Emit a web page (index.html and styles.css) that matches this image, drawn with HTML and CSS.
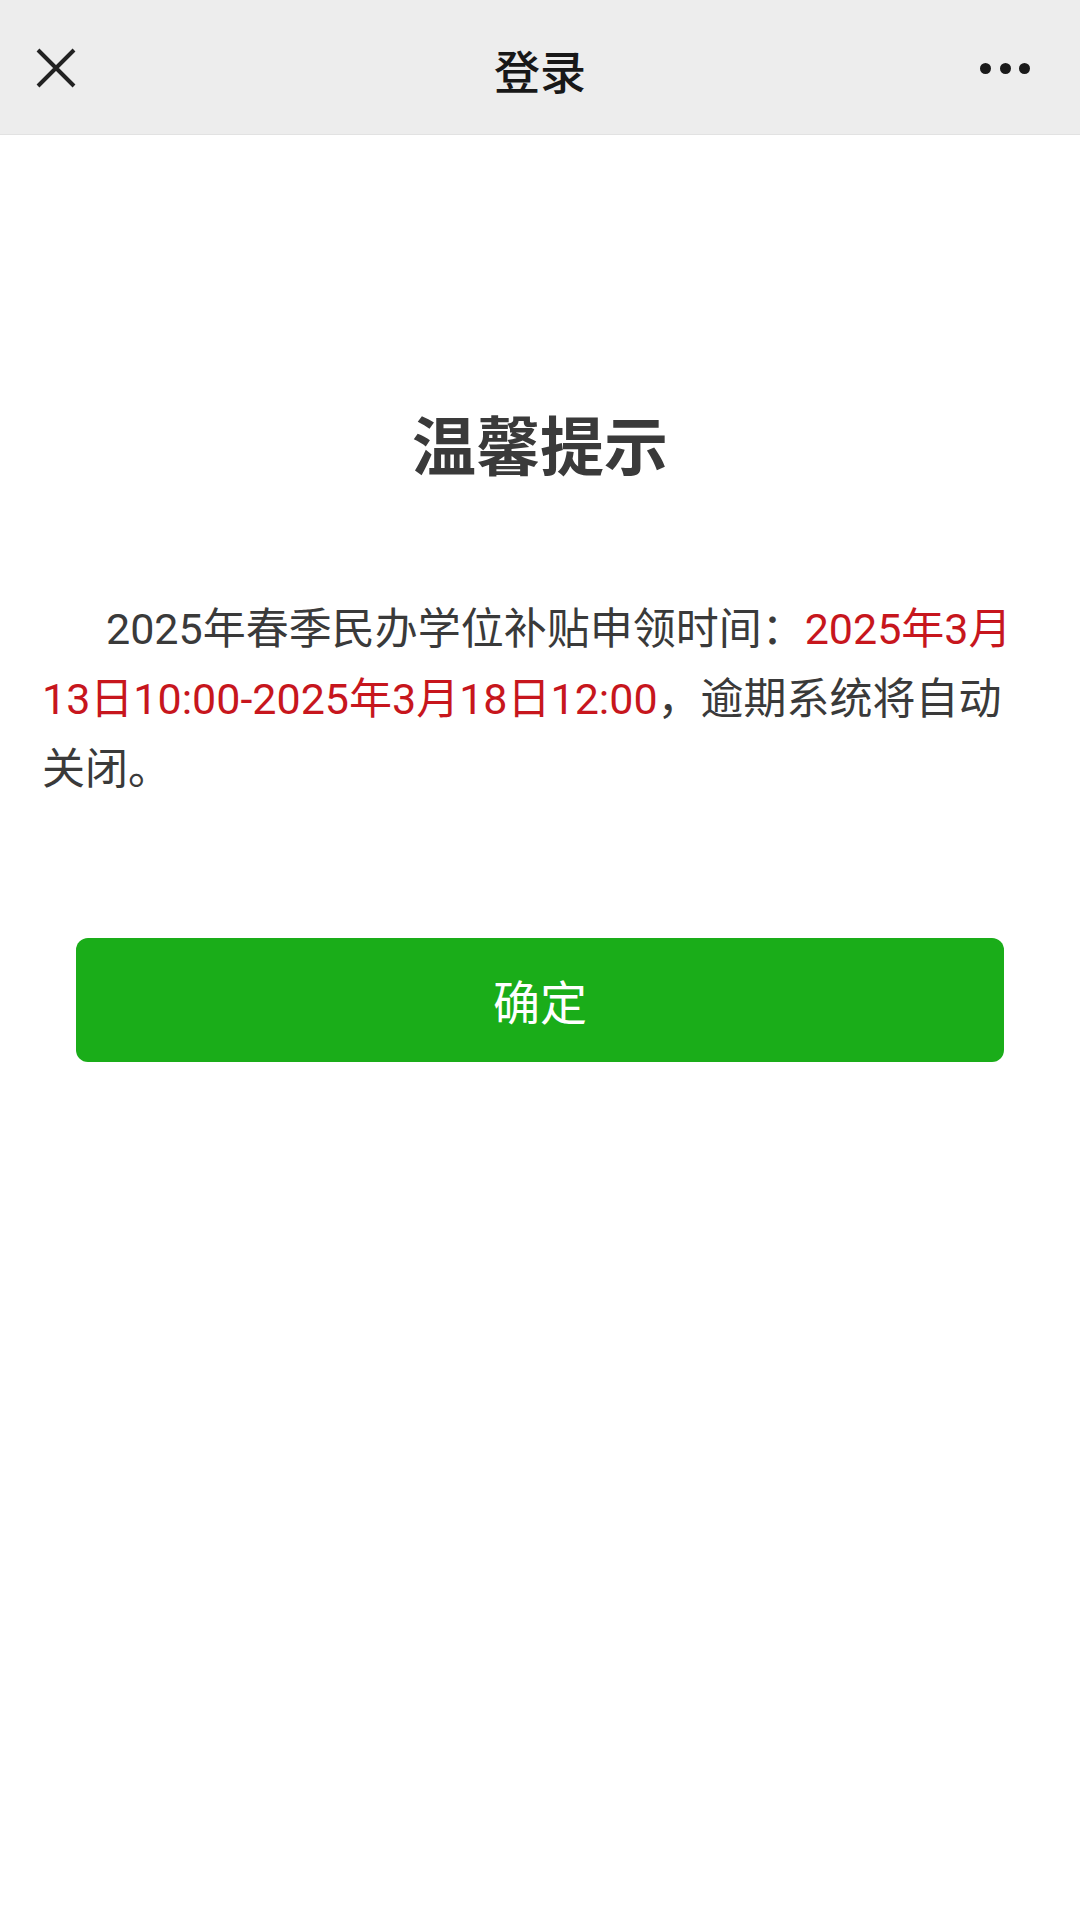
FILE: index.html
```html
<!DOCTYPE HTML>
<html lang="zh-CN">
<head>
	<meta charset="utf-8">
	<title>登录</title>
	<link rel="stylesheet" href="styles.css">
</head>
<body>
	<div class="topbar">
		<span class="topbar-close">
			<svg width="40" height="40" viewBox="0 0 40 40">
				<path d="M2 2 L38 38 M38 2 L2 38" stroke="#222" stroke-width="4" fill="none"/>
			</svg>
		</span>
		<div class="topbar-title">登录</div>
		<span class="topbar-more">
			<i></i><i></i><i></i>
		</span>
	</div>

	<div class="notice">
		<h1 class="notice-title">温馨提示</h1>
		<p class="notice-text">2025年春季民办学位补贴申领时间：<span class="hl">2025年3月13日10:00-2025年3月18日12:00</span>，逾期系统将自动关闭。</p>
		<a class="btn-ok" href="#">确定</a>
	</div>
</body>
</html>
```

FILE: styles.css
```css
html {
	height: 100%;
}

body {
	margin: 0;
	padding: 0;
	background: #ffffff;
	color: #333333;
	font-family: Roboto, "Noto Sans CJK SC", sans-serif;
	min-height: 100%;
}

.topbar {
	height: 134px;
	background-color: #ededed;
	border-bottom: 1px solid #e2e2e2;
	display: grid;
	grid-template-columns: 1fr auto 1fr;
	align-items: center;
	padding: 0 36px 0 36px;
}

.topbar-close {
	width: 40px;
	height: 40px;
	display: block;
	margin-top: 2px;
	justify-self: start;
}

.topbar-close svg {
	display: block;
}

.topbar-title {
	font-family: "Noto Sans CJK SC", sans-serif;
	font-size: 46px;
	font-weight: 500;
	color: #181818;
	margin-top: 4px;
}

.topbar-more {
	width: 50px;
	display: flex;
	justify-content: space-between;
	align-items: center;
	margin-top: 2px;
	margin-right: 14px;
	justify-self: end;
}

.topbar-more i {
	width: 11px;
	height: 11px;
	border-radius: 50%;
	background: #1a1a1a;
	display: block;
}

.notice {
	padding: 0 42px;
}

.notice-title {
	margin: 262px 0 0 0;
	text-align: center;
	font-family: "Noto Sans CJK SC", sans-serif;
	font-size: 64px;
	font-weight: bold;
	line-height: 90px;
	color: #3a3a3a;
}

.notice-text {
	margin: 107px 0 0 0;
	font-size: 43px;
	line-height: 70px;
	text-indent: 64px;
	color: #3a3a3a;
}

.hl {
	color: #c7161d;
}

.btn-ok {
	display: block;
	margin: 134px 34px 0 34px;
	height: 124px;
	line-height: 124px;
	border-radius: 12px;
	background-color: #1aad19;
	color: #ffffff;
	text-align: center;
	text-decoration: none;
	font-family: "Noto Sans CJK SC", sans-serif;
	font-size: 47px;
}
```
